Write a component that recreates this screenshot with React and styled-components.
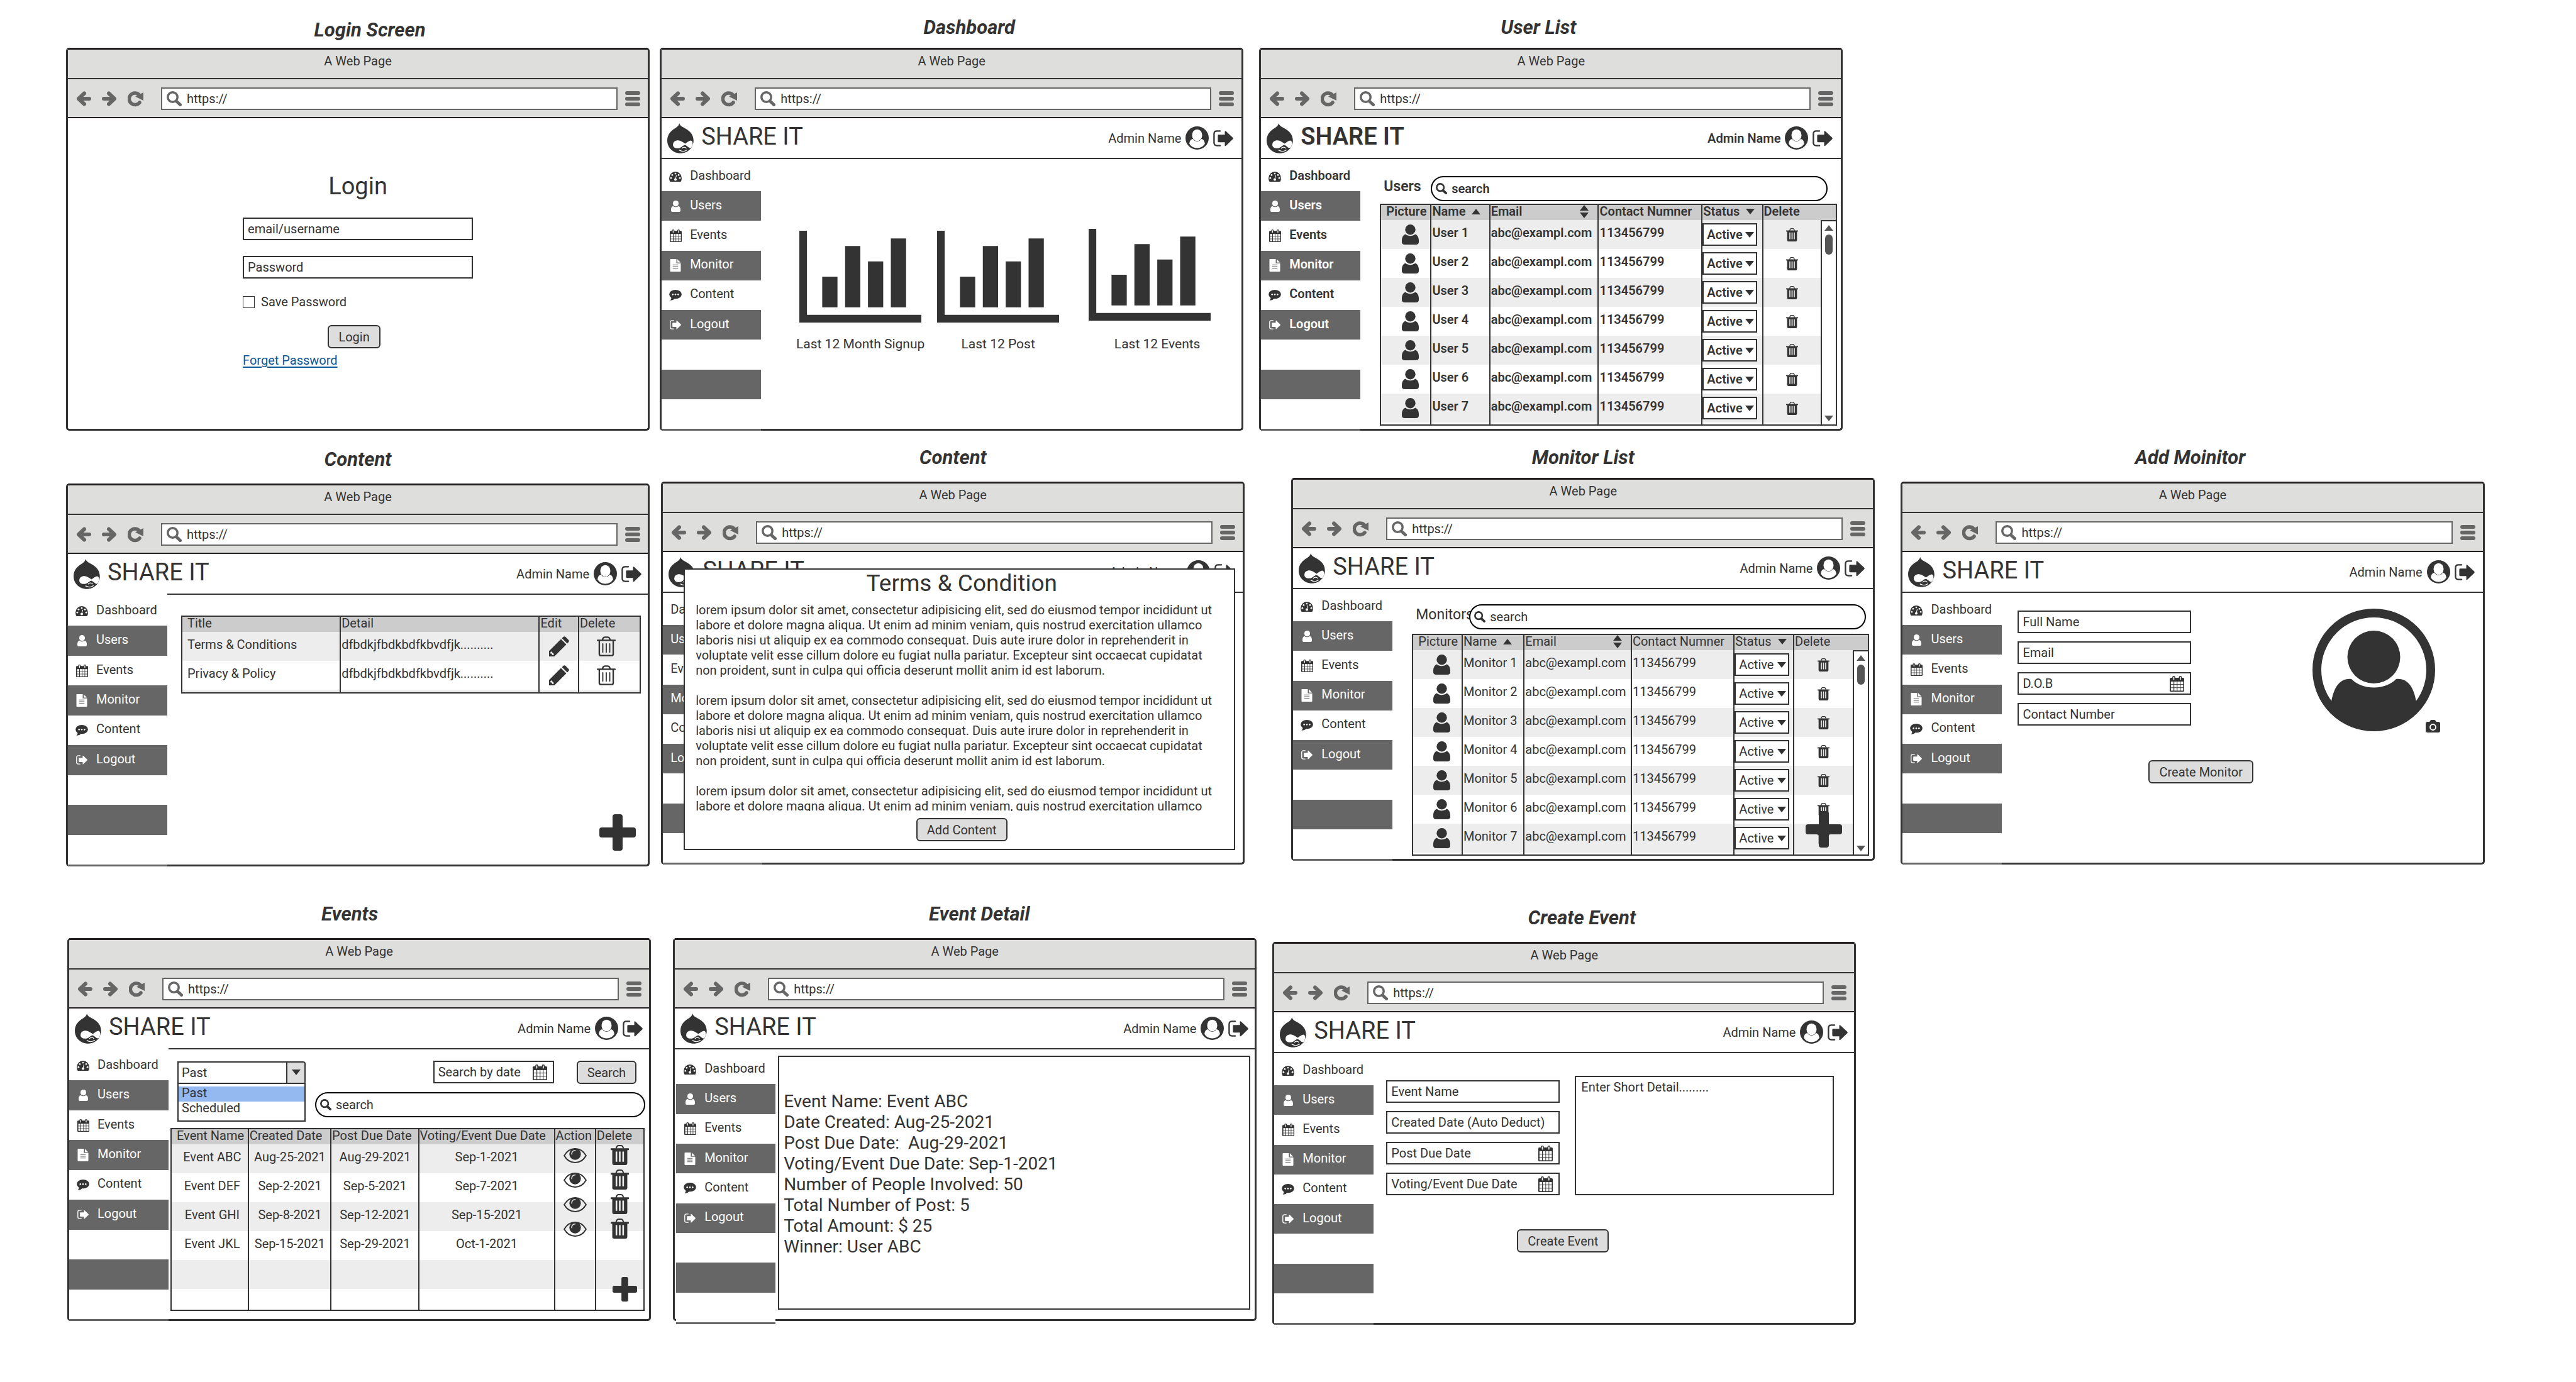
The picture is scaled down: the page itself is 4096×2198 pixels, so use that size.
import React from "react";
import styled, { createGlobalStyle, css } from "styled-components";

const ink = "#333333";
const black = "#231f20";
const slate = "#666666";
const chrome = "#dededc";
const headGray = "#cccccc";
const stripe = "#ededed";

const GlobalStyle = createGlobalStyle`
  *, *::before, *::after { box-sizing: border-box; }
  body {
    margin: 0;
    background: #ffffff;
    color: ${ink};
    font-family: Roboto, "Liberation Sans", sans-serif;
    font-size: 20px;
    line-height: 24px;
  }
  button, input, select, textarea { font: inherit; color: inherit; }
  input::placeholder, textarea::placeholder { color: ${ink}; opacity: 1; }
  svg { display: block; flex: none; }
`;

/* ---------- icons ---------- */

const LogoIcon = () => (
  <svg width="42" height="48" viewBox="57 30 166 189" aria-hidden="true">
    <path
      fill={ink}
      d="M133 30C136 45 150 52 170 62C202 79 222 105 222 138C222 185 185 218 140 218C92 218 57 182 57 138C57 100 80 76 108 60C122 52 130 42 133 30Z"
    />
    <path
      fill="#fff"
      d="M93 165C93 146 108 136 127 137C145 139 158 151 170 158C180 151 192 139 205 138C215 140 218 150 216 162C214 175 207 187 200 186C190 184 180 170 168 166C155 172 142 187 122 187C103 187 93 178 93 165Z"
    />
    <path fill={ink} d="M140 190C150 174 160 168 168 168C178 170 190 182 194 190C186 200 150 202 140 190Z" />
    <path fill="none" stroke="#fff" strokeWidth="5" strokeLinecap="round" d="M149 187C156 178 171 178 176 187M133 199C148 208 168 208 181 198" />
    <path fill="none" stroke="#fff" strokeWidth="3" d="M200 198C210 188 217 174 219 160" />
  </svg>
);

const DashIcon = () => (
  <svg width="20" height="16" viewBox="69 342 78 63" aria-hidden="true">
    <path fill={ink} d="M69 382a39 40 0 0 1 78 0C147 392 145 399 141 405H75C71 399 69 392 69 382Z" />
    <g fill="#fff">
      <circle cx="80" cy="382" r="5.5" />
      <circle cx="88" cy="363" r="5.5" />
      <circle cx="108" cy="354" r="5.5" />
      <circle cx="128" cy="363" r="5.5" />
      <circle cx="136" cy="382" r="5.5" />
      <circle cx="108" cy="391" r="8" />
      <path d="M112 365l4 1-6 24-4-1Z" />
    </g>
  </svg>
);

const UserIcon = ({ width = 15, height = 18, color = "#fff" }) => (
  <svg width={width} height={height} viewBox="78 521 56 70" preserveAspectRatio="none" aria-hidden="true">
    <ellipse cx="106" cy="539" rx="17" ry="18" fill={color} />
    <path
      fill={color}
      d="M90 555c4 4 10 6 16 6s12-2 16-6c9 3 13 14 12 28c0 5-4 8-9 8H87c-5 0-9-3-9-8c-1-14 3-25 12-28Z"
    />
  </svg>
);

const cols = [75, 92, 108, 124];
const lines = [732, 748, 764];
const CalendarIcon = ({ width = 19, height = 20 }) => (
  <svg width={width} height={height} viewBox="69 704 73 78" preserveAspectRatio="none" aria-hidden="true">
    <rect x="69" y="713" width="73" height="69" rx="5" fill={ink} />
    {lines.map((y) => cols.map((x) => <rect key={`${x}-${y}`} x={x} y={y} width="13" height="13" fill="#fff" />))}
    {[82, 115].map((x) => (
      <g key={x}>
        <rect x={x} y="704" width="15" height="24" rx="7" fill={ink} />
        <rect x={x + 5} y="709" width="5" height="15" rx="2" fill="#fff" />
      </g>
    ))}
  </svg>
);

const FileIcon = () => (
  <svg width="18" height="20" viewBox="72 889 68 80" aria-hidden="true">
    <path fill="#fff" d="M75 889H112V916H140V965Q140 969 136 969H76Q72 969 72 965V892Q72 889 75 889ZM118 890L139 911H118Z" />
    <path stroke={slate} strokeWidth="4" d="M89 926H123M89 937H123M89 948H123" />
  </svg>
);

const CommentIcon = () => (
  <svg width="20" height="17" viewBox="69 1086 78 67" aria-hidden="true">
    <ellipse cx="108" cy="1114" rx="39" ry="28" fill={ink} />
    <path fill={ink} d="M81 1130C84 1142 80 1147 74 1152C90 1152 99 1147 105 1139Z" />
    <g fill="#fff">
      <circle cx="91" cy="1115" r="5" />
      <circle cx="108" cy="1115" r="5" />
      <circle cx="125" cy="1115" r="5" />
    </g>
  </svg>
);

const ExitIcon = ({ width = 18, height = 15, color = "#fff" }) => (
  <svg width={width} height={height} viewBox="69 1272 69 57" preserveAspectRatio="none" aria-hidden="true">
    <path fill="none" stroke={color} strokeWidth="5" strokeLinecap="round" d="M93 1275H82Q72 1275 72 1285V1316Q72 1326 82 1326H93" />
    <path fill={color} d="M88 1288H109V1277Q109 1273 113 1276L136 1298Q139 1301 136 1304L113 1326Q109 1329 109 1325V1314H88Q85 1314 85 1311V1291Q85 1288 88 1288Z" />
  </svg>
);

const AccountIcon = () => (
  <svg width="37" height="37" viewBox="0 0 36 36" aria-hidden="true">
    <circle cx="18" cy="18" r="18" fill={ink} />
    <ellipse cx="18" cy="13.5" rx="7.8" ry="9" fill="#fff" />
    <path fill="#fff" d="M6 27C6.500 22 8.500 20 11.500 19.500C14.500 24.500 21.500 24.500 24.500 19.500C27.500 20 29.500 22 30 27C27 31.500 23 33.500 18 33.500C13 33.500 9 31.500 6 27Z" />
  </svg>
);

const PortraitIcon = () => (
  <svg width="195" height="195" viewBox="0 0 195 195" aria-hidden="true">
    <circle cx="97.5" cy="97.5" r="90.5" fill="#fff" stroke={ink} strokeWidth="14" />
    <circle cx="97.5" cy="77" r="42" fill={ink} />
    <path
      fill={ink}
      d="M62 112C70 120 82 125.500 97.500 125.500C113 125.500 125 120 133 112C152 110 161 126 165 148L168 160C150 180 125 190 97.500 190C70 190 45 180 27 160L30 148C34 126 43 110 62 112Z"
    />
  </svg>
);

const CameraIcon = () => (
  <svg width="23" height="20" viewBox="0 0 23 20" aria-hidden="true">
    <path fill={ink} d="M7 2Q7.500 0 9 0H14Q15.500 0 16 2L17 3H20Q23 3 23 6V17Q23 20 20 20H3Q0 20 0 17V6Q0 3 3 3H6Z" />
    <circle cx="11.500" cy="11.500" r="4.500" fill="none" stroke="#fff" strokeWidth="1.800" />
  </svg>
);

const EyeIcon = () => (
  <svg width="37" height="24" viewBox="138 108 144 94" aria-hidden="true">
    <path fill="none" stroke={ink} strokeWidth="8" d="M142 155C158 127 184 112 210 112S262 127 278 155C262 183 236 198 210 198S158 183 142 155Z" />
    <circle cx="210" cy="145" r="36" fill={ink} />
    <path fill="none" stroke={stripe} strokeWidth="6" strokeLinecap="round" d="M189 146C189 132 197 123 210 123" />
  </svg>
);

const TrashIcon = ({ width = 19, height = 21 }) => (
  <svg width={width} height={height} viewBox="441 87 114 126" preserveAspectRatio="none" aria-hidden="true">
    <rect x="441" y="108" width="114" height="11" rx="2" fill={ink} />
    <path fill="none" stroke={ink} strokeWidth="8" d="M474 110L480 97Q483 91 490 91H506Q513 91 516 97L522 110" />
    <path fill={ink} d="M451 114H545V200Q545 213 533 213H463Q451 213 451 200Z" />
    <path stroke={stripe} strokeWidth="10" d="M477 128V192M498 128V192M519 128V192" />
  </svg>
);

const TrashOutlineIcon = () => (
  <svg width="30" height="32" viewBox="441 87 114 126" preserveAspectRatio="none" aria-hidden="true">
    <path fill="none" stroke={ink} strokeWidth="9" strokeLinecap="round" d="M445 112H551M474 110L480 97Q483 92 490 92H506Q513 92 516 97L522 110" />
    <path fill="none" stroke={ink} strokeWidth="9" d="M456 114V198Q456 208 466 208H530Q540 208 540 198V114" />
    <path stroke={ink} strokeWidth="7" strokeLinecap="round" d="M477 134V186M498 134V186M519 134V186" />
  </svg>
);

const PencilIcon = () => (
  <svg width="32" height="32" viewBox="0 0 32 32" aria-hidden="true">
    <path fill={ink} d="M0 32V23.500L19 4.500L27.500 13L8.500 32ZM20.500 3L23 .8Q24.500 -.3 26 .8L31.200 6Q32.300 7.500 31.200 9L29 11.500Z" />
    <path fill="#fff" d="M3.500 24L8 28.500L6.500 29.800H4.700V27.400H2.300V25.300Z" />
  </svg>
);

const PlusIcon = ({ size }) => (
  <svg width={size} height={size} viewBox="0 0 58 58" aria-hidden="true">
    <rect x="21" width="16" height="58" rx="4" fill={ink} />
    <rect y="21" width="58" height="16" rx="4" fill={ink} />
  </svg>
);

const BackIcon = () => (
  <svg width="24" height="24" viewBox="0 0 24 24" aria-hidden="true">
    <path fill="none" stroke={slate} strokeWidth="6" strokeLinecap="round" strokeLinejoin="round" d="M13 3.500L4 12L13 20.500M5 12H21" />
  </svg>
);

const ForwardIcon = () => (
  <svg width="24" height="24" viewBox="0 0 24 24" aria-hidden="true">
    <path fill="none" stroke={slate} strokeWidth="6" strokeLinecap="round" strokeLinejoin="round" d="M11 3.500L20 12L11 20.500M19 12H3" />
  </svg>
);

const ReloadIcon = () => (
  <svg width="25" height="25" viewBox="0 0 25 25" aria-hidden="true">
    <path fill="none" stroke={slate} strokeWidth="5.500" strokeLinecap="round" d="M19 18A9.300 9.300 0 1 1 18 5.500" />
    <path fill={slate} d="M25 2V15L12 8.500Z" />
  </svg>
);

const MenuIcon = () => (
  <svg width="24" height="24" viewBox="0 0 24 24" aria-hidden="true">
    <rect width="24" height="6" rx="3" fill={slate} />
    <rect y="9" width="24" height="6" rx="3" fill={slate} />
    <rect y="18" width="24" height="6" rx="3" fill={slate} />
  </svg>
);

const SearchIcon = ({ size = 18, color = ink }) => (
  <svg width={size} height={size} viewBox="0 0 24 24" aria-hidden="true">
    <circle cx="9.500" cy="9.500" r="7.700" fill="none" stroke={color} strokeWidth="3.500" />
    <path stroke={color} strokeWidth="5" strokeLinecap="round" d="M15.500 16L21.500 21.500" />
  </svg>
);

const UpArrow = () => (
  <svg width="14" height="9" viewBox="0 0 14 9" aria-hidden="true">
    <path fill="currentColor" d="M7 0L14 9H0Z" />
  </svg>
);

const DownArrow = () => (
  <svg width="14" height="9" viewBox="0 0 14 9" aria-hidden="true">
    <path fill="currentColor" d="M0 0H14L7 9Z" />
  </svg>
);

const BarChart = () => (
  <svg width="194" height="146" viewBox="0 0 16 12" preserveAspectRatio="none" aria-hidden="true">
    <path fill={ink} d="M0 0H1V11H16V12H0ZM3 6H5V10H3ZM6 2H8V10H6ZM9 4H11V10H9ZM12 1H14V10H12Z" />
  </svg>
);

/* ---------- board and window ---------- */

const Canvas = styled.main`
  padding-top: 28px;
`;

const BoardRow = styled.div`
  display: flex;
  align-items: flex-start;
  margin-top: ${(p) => p.$space || 0}px;
`;

const Board = styled.section`
  flex: 0 0 22.66%;
  margin-left: ${(p) => p.$before}px;
  margin-top: ${(p) => p.$drop || 0}px;
  font-weight: ${(p) => (p.$strong ? 600 : 400)};
`;

const BoardTitle = styled.h2`
  margin: 0 0 ${(p) => p.$space}px;
  padding-left: ${(p) => p.$lead || 0}px;
  padding-right: ${(p) => p.$trail || 0}px;
  font-size: 31px;
  line-height: 32px;
  font-weight: 700;
  font-style: italic;
  text-align: center;
`;

const Window = styled.div`
  position: relative;
  display: flex;
  flex-direction: column;
  min-height: 609px;
  border: 3px solid ${ink};
  border-top-color: ${black};
  border-radius: 5px;
  background: #ffffff;
`;

const TitleBar = styled.div`
  height: 47px;
  padding-top: 6px;
  border-bottom: 2px solid ${ink};
  border-radius: 2px 2px 0 0;
  background: ${chrome};
  font-weight: 400;
  text-align: center;
`;

const Toolbar = styled.div`
  display: flex;
  align-items: center;
  height: 62px;
  padding: 2px 12px 0 13px;
  border-bottom: 2px solid ${black};
  background: ${chrome};
  font-weight: 400;
`;

const NavButtons = styled.div`
  display: flex;
  gap: 17px;
  margin-right: 28px;
`;

const IconButton = styled.button`
  display: block;
  padding: 0;
  border: 0;
  background: none;
`;

const AddressBox = styled.label`
  display: flex;
  flex: 1;
  align-items: center;
  gap: 8px;
  height: 36px;
  margin-right: 12px;
  padding-left: 7px;
  border: 2px solid ${slate};
  background: #ffffff;
`;

const BareInput = styled.input`
  flex: 1;
  width: 100%;
  min-width: 0;
  height: 32px;
  padding: 0;
  border: 0;
  outline: 0;
  background: none;
`;

const AppHeader = styled.header`
  display: flex;
  align-items: center;
  justify-content: space-between;
  height: 65px;
  padding: 0 ${(p) => (p.$wide ? 10 : 13)}px 0 9px;
  border-bottom: 2px solid ${ink};
`;

const Brand = styled.div`
  display: flex;
  align-items: center;
  gap: 12px;
`;

const BrandName = styled.span`
  padding-bottom: 6px;
  font-size: 38px;
  line-height: 44px;
`;

const Account = styled.div`
  display: flex;
  align-items: center;
  gap: 7px;
`;

const Body = styled.div`
  display: flex;
  flex: 1;
`;

const Side = styled.nav`
  position: relative;
  display: grid;
  flex: none;
  grid-template-rows: repeat(9, 1fr) 3px;
  width: 158px;
  margin: ${(p) => (p.$wide ? -2 : 0)}px 0 -3px;
  padding-top: 4px;
  background: #ffffff;
  ${(p) =>
    p.$lowered &&
    css`
      margin: 4px 0 -8px 2px;
    `}
`;

const SideItem = styled.a`
  display: flex;
  align-items: center;
  gap: 13px;
  min-height: 0;
  padding-left: 12px;
  background: ${(p) => (p.$dark ? slate : "#ffffff")};
  color: ${(p) => (p.$dark ? "#ffffff" : ink)};
  text-decoration: none;
`;

const SideIcon = styled.span`
  display: flex;
  justify-content: center;
  width: 20px;
`;

const SideLabel = styled.span`
  padding-bottom: 4px;
`;

const SideBlank = styled.span`
  background: ${(p) => (p.$dark ? slate : "#ffffff")};
`;

const Main = styled.div`
  flex: 1;
  min-width: 0;
  padding: ${(p) => p.$pad};
`;

const navItems = [
  ["Dashboard", DashIcon],
  ["Users", UserIcon],
  ["Events", CalendarIcon],
  ["Monitor", FileIcon],
  ["Content", CommentIcon],
  ["Logout", ExitIcon],
];

function Browser({ children }) {
  return (
    <Window>
      <TitleBar>A Web Page</TitleBar>
      <Toolbar>
        <NavButtons>
          <IconButton aria-label="Back"><BackIcon /></IconButton>
          <IconButton aria-label="Forward"><ForwardIcon /></IconButton>
          <IconButton aria-label="Reload"><ReloadIcon /></IconButton>
        </NavButtons>
        <AddressBox>
          <SearchIcon size={24} color={slate} />
          <BareInput type="text" aria-label="Address" defaultValue="https://" />
        </AddressBox>
        <IconButton aria-label="Menu"><MenuIcon /></IconButton>
      </Toolbar>
      {children}
    </Window>
  );
}

function AppWindow({ children, pad, lowered, raised, wide, plainNav, overlay }) {
  return (
    <Browser>
      <AppHeader $wide={wide}>
        <Brand>
          <LogoIcon />
          <BrandName>SHARE IT</BrandName>
        </Brand>
        <Account>
          <span>Admin Name</span>
          <AccountIcon />
          <IconButton aria-label="Sign out"><ExitIcon width={32} height={26} color={ink} /></IconButton>
        </Account>
      </AppHeader>
      <Body>
        <Side $lowered={lowered} $wide={raised}>
          {navItems.map(([label, Icon], i) => (
            <SideItem href="#" key={label} $dark={i % 2 === 1}>
              {!plainNav && <SideIcon><Icon /></SideIcon>}
              <SideLabel>{label}</SideLabel>
            </SideItem>
          ))}
          <SideBlank />
          <SideBlank $dark />
          <SideBlank />
          <SideBlank $dark />
        </Side>
        <Main $pad={pad}>{children}</Main>
      </Body>
      {overlay}
    </Browser>
  );
}

/* ---------- form parts ---------- */

const Button = styled.button`
  height: 37px;
  padding: 0 15px;
  border: 2px solid ${ink};
  border-radius: 6px;
  background: #dddddd;
`;

const TextField = styled.input`
  display: block;
  width: 100%;
  height: 36px;
  padding: 0 6px;
  border: 2px solid ${ink};
  border-radius: 0;
  outline: 0;
  background: #ffffff;
`;

const DateBox = styled.label`
  display: flex;
  align-items: center;
  width: ${(p) => p.$width};
  height: 36px;
  padding: 0 9px 0 6px;
  border: 2px solid ${ink};
  background: #ffffff;
`;

const DateField = ({ label, width = "100%" }) => (
  <DateBox $width={width}>
    <BareInput type="text" aria-label={label} placeholder={label} />
    <CalendarIcon width={23} height={25} />
  </DateBox>
);

const LoginForm = styled.form`
  display: flex;
  flex-direction: column;
  align-self: center;
  width: 366px;
  margin-top: 86px;
`;

const LoginHeading = styled.h3`
  margin: 0 0 28px;
  font-size: 38px;
  line-height: 44px;
  font-weight: 400;
  text-align: center;
`;

const LoginFields = styled.div`
  display: grid;
  gap: 25px;
`;

const SaveLabel = styled.label`
  display: flex;
  align-items: center;
  gap: 10px;
  height: 20px;
  margin: 27px 0;
`;

const CheckBox = styled.input`
  width: 19px;
  height: 19px;
  margin: 0;
  border: 1px solid ${ink};
  background: #ffffff;
  appearance: none;
`;

const LoginAction = styled.div`
  display: flex;
  justify-content: center;
  padding-right: 12px;
`;

const ForgotLink = styled.a`
  align-self: flex-start;
  margin-top: 7px;
  color: #0b5696;
  text-decoration: underline;
  text-decoration-thickness: 2px;
  text-underline-offset: 3px;
`;

const FormRow = styled.div`
  display: flex;
  align-items: flex-start;
  justify-content: space-between;
  gap: 24px;
`;

const FieldStack = styled.div`
  display: grid;
  flex: none;
  align-content: start;
  gap: 13px;
  width: 276px;
  padding-top: ${(p) => p.$top}px;
`;

const FormAction = styled.div`
  padding: 54px 0 0 208px;
`;

const DetailArea = styled.textarea`
  flex: 1;
  align-self: stretch;
  min-width: 0;
  padding: 4px 8px;
  border: 2px solid ${ink};
  outline: 0;
  background: #ffffff;
  resize: none;
`;

const Portrait = styled.div`
  position: relative;
  margin-bottom: -8px;
`;

const CameraButton = styled(IconButton)`
  position: absolute;
  right: -8px;
  bottom: -2px;
`;

/* ---------- search and lists ---------- */

const SearchRow = styled.div`
  display: flex;
  align-items: flex-start;
  margin-bottom: ${(p) => p.$below}px;
  padding: 0 ${(p) => p.$right}px 0 6px;
`;

const ListLabel = styled.h3`
  flex: none;
  width: ${(p) => p.$width}px;
  margin: 0;
  font-size: 23px;
  line-height: 34px;
  font-weight: inherit;
  white-space: nowrap;
`;

const SearchPill = styled.label`
  position: relative;
  display: flex;
  flex: 1;
  align-items: center;
  gap: 7px;
  height: 40px;
  padding: 0 16px 0 6px;
  border: 2px solid #000000;
  border-radius: 20px;
  background: #ffffff;
`;

const SearchBox = () => (
  <SearchPill>
    <SearchIcon />
    <BareInput type="text" aria-label="Search" placeholder="search" />
  </SearchPill>
);

const Frame = styled.div`
  position: relative;
  border: 2px solid ${ink};
`;

const Table = styled.table`
  width: 100%;
  border-collapse: separate;
  border-spacing: 0;
  table-layout: fixed;
`;

const Col = styled.col`
  width: ${(p) => p.$w};
`;

const Th = styled.th`
  height: 24px;
  padding: 0 0 4px 1px;
  background: ${headGray};
  font-weight: inherit;
  line-height: 20px;
  text-align: left;
  white-space: nowrap;
  & + & { border-left: 2px solid ${ink}; }
  &:first-child { padding-left: 8px; }
`;

const HeadCell = styled.span`
  display: flex;
  align-items: center;
  gap: 10px;
  height: 20px;
`;

const SortBoth = styled.span`
  display: grid;
  gap: 3px;
  margin-left: auto;
  margin-right: 14px;
`;

const Td = styled.td`
  position: relative;
  padding: 0 0 6px 1px;
  white-space: nowrap;
  text-align: ${(p) => (p.$center ? "center" : "left")};
  & + & { border-left: 2px solid ${ink}; }
  &:first-child { padding-left: 8px; }
`;

const MediaTd = styled(Td)`
  &, &:first-child { padding: 0 ${(p) => p.$right || 0}px 0 ${(p) => p.$left || 0}px; }
  svg { margin: 0 auto; }
`;

const FillTd = styled(Td)`
  &, &:first-child { padding: 0; }
`;

const Tr = styled.tr`
  height: ${(p) => p.$h || 46}px;
  &:nth-child(odd) { background: ${stripe}; }
`;

const StatusBox = styled.span`
  position: relative;
  display: block;
  width: 87px;
`;

const StatusSelect = styled.select`
  display: block;
  width: 87px;
  height: 36px;
  padding: 0 5px;
  border: 2px solid ${ink};
  border-radius: 0;
  background: #ffffff;
  appearance: none;
`;

const StatusArrow = styled.span`
  position: absolute;
  top: 14px;
  right: 5px;
  pointer-events: none;
`;

const RowButton = styled(IconButton)`
  margin: 0 auto;
`;

const ScrollTrack = styled.div`
  position: absolute;
  top: 24px;
  right: 0;
  bottom: 0;
  display: flex;
  flex-direction: column;
  align-items: center;
  width: 24px;
  padding: 6px 0 5px;
  border-top: 2px solid ${ink};
  border-left: 2px solid ${ink};
  background: #ffffff;
  color: #555555;
`;

const ScrollThumb = styled.span`
  width: 12px;
  height: 32px;
  margin: 6px 0 auto;
  border-radius: 6px;
  background: #555555;
`;

const PlusButton = styled(IconButton)`
  position: absolute;
  right: ${(p) => p.$right}px;
  bottom: ${(p) => p.$bottom}px;
`;

const fillerCells = (n) => Array.from({ length: n }, (_, i) => <FillTd key={i} />);

function PeopleTable({ prefix, widths }) {
  return (
    <Frame>
      <Table>
        <colgroup>{widths.map((w, i) => <Col key={i} $w={w} />)}</colgroup>
        <thead>
          <tr>
            <Th>Picture</Th>
            <Th><HeadCell>Name<UpArrow /></HeadCell></Th>
            <Th><HeadCell>Email<SortBoth><UpArrow /><DownArrow /></SortBoth></HeadCell></Th>
            <Th>Contact Numner</Th>
            <Th><HeadCell>Status<DownArrow /></HeadCell></Th>
            <Th>Delete</Th>
          </tr>
        </thead>
        <tbody>
          {[1, 2, 3, 4, 5, 6, 7].map((n) => (
            <Tr key={n}>
              <MediaTd $left={14}><UserIcon width={27} height={32} color={ink} /></MediaTd>
              <Td>{prefix} {n}</Td>
              <Td>abc@exampl.com</Td>
              <Td>113456799</Td>
              <MediaTd>
                <StatusBox>
                  <StatusSelect aria-label={`${prefix} ${n} status`} defaultValue="Active">
                    <option>Active</option>
                  </StatusSelect>
                  <StatusArrow><DownArrow /></StatusArrow>
                </StatusBox>
              </MediaTd>
              <MediaTd $right={24}>
                <RowButton aria-label={`Delete ${prefix} ${n}`}><TrashIcon /></RowButton>
              </MediaTd>
            </Tr>
          ))}
          <Tr $h={3}>{fillerCells(6)}</Tr>
        </tbody>
      </Table>
      <ScrollTrack>
        <UpArrow />
        <ScrollThumb />
        <DownArrow />
      </ScrollTrack>
    </Frame>
  );
}

/* ---------- dashboard ---------- */

const ChartRow = styled.div`
  display: flex;
  align-items: flex-end;
`;

const Figure = styled.figure`
  display: flex;
  flex-direction: column;
  gap: ${(p) => p.$gap}px;
  width: ${(p) => p.$width}px;
  margin: 0 0 0 ${(p) => p.$before}px;
`;

const ChartBox = styled.div`
  display: flex;
  justify-content: ${(p) => p.$align || "center"};
`;

const Caption = styled.figcaption`
  font-size: 21px;
  text-align: center;
  white-space: nowrap;
`;

/* ---------- terms dialog ---------- */

const Dialog = styled.div`
  position: absolute;
  z-index: 1;
  top: 135px;
  right: 12px;
  bottom: 20px;
  left: 33px;
  display: flex;
  flex-direction: column;
  align-items: center;
  padding: 0 10px 0 17px;
  border: 2px solid ${ink};
  background: #ffffff;
`;

const DialogTitle = styled.h3`
  margin: 0 0 8px;
  font-size: 37px;
  line-height: 44px;
  font-weight: 400;
`;

const DialogText = styled.div`
  align-self: stretch;
  height: 332px;
  margin-bottom: 11px;
  overflow: hidden;
  white-space: pre;
`;

const lorem = `lorem ipsum dolor sit amet, consectetur adipisicing elit, sed do eiusmod tempor incididunt ut
labore et dolore magna aliqua. Ut enim ad minim veniam, quis nostrud exercitation ullamco
laboris nisi ut aliquip ex ea commodo consequat. Duis aute irure dolor in reprehenderit in
voluptate velit esse cillum dolore eu fugiat nulla pariatur. Excepteur sint occaecat cupidatat
non proident, sunt in culpa qui officia deserunt mollit anim id est laborum.`;

const loremStart = lorem.split("\n").slice(0, 2).join("\n");

/* ---------- events ---------- */

const FilterRow = styled.div`
  display: flex;
  align-items: center;
  justify-content: space-between;
  padding: 0 20px 0 14px;
`;

const FilterEnd = styled.div`
  display: flex;
  gap: 36px;
`;

const DropBox = styled.div`
  position: relative;
  width: 204px;
`;

const DropSelect = styled.select`
  display: block;
  width: 100%;
  height: 36px;
  padding: 0 5px;
  border: 2px solid ${ink};
  border-radius: 0 4px 4px 0;
  background: #ffffff;
  appearance: none;
`;

const DropArrow = styled.span`
  position: absolute;
  top: 2px;
  right: 2px;
  display: flex;
  align-items: center;
  justify-content: center;
  width: 29px;
  height: 32px;
  border-left: 2px solid ${ink};
  background: #dddddd;
  pointer-events: none;
`;

const DropMenu = styled.ul`
  position: absolute;
  top: 34px;
  left: 0;
  width: 100%;
  height: 62px;
  margin: 0;
  padding: 4px 0 0;
  border: 2px solid ${ink};
  background: #ffffff;
  list-style: none;
`;

const DropItem = styled.li`
  padding: 0 0 3px 5px;
  background: ${(p) => (p.$active ? "#94b9f1" : "none")};
  line-height: 21px;
`;

const EventSearch = styled.div`
  display: flex;
  margin: 13px 6px 17px 233px;
`;

const EventTableWrap = styled.div`
  margin: 0 7px 0 3px;
`;

const IconStack = styled.div`
  position: absolute;
  z-index: 1;
  top: ${(p) => p.$top}px;
  left: 0;
  display: flex;
  flex-direction: column;
  align-items: center;
  gap: ${(p) => p.$gap}px;
  width: 100%;
`;

const events = [
  ["Event ABC", "Aug-25-2021", "Aug-29-2021", "Sep-1-2021"],
  ["Event DEF", "Sep-2-2021", "Sep-5-2021", "Sep-7-2021"],
  ["Event GHI", "Sep-8-2021", "Sep-12-2021", "Sep-15-2021"],
  ["Event JKL", "Sep-15-2021", "Sep-29-2021", "Oct-1-2021"],
];

function EventTable() {
  return (
    <Frame>
      <Table>
        <colgroup>
          {["16.1%", "17.5%", "18.6%", "28.8%", "8.7%", "10.3%"].map((w, i) => <Col key={i} $w={w} />)}
        </colgroup>
        <thead>
          <tr>
            {["Event Name", "Created Date", "Post Due Date", "Voting/Event Due Date", "Action", "Delete"].map((h) => (
              <Th key={h}>{h}</Th>
            ))}
          </tr>
        </thead>
        <tbody>
          {events.map((row, i) => (
            <Tr key={row[0]}>
              {row.map((cell) => <Td $center key={cell}>{cell}</Td>)}
              <Td>
                {i === 0 && (
                  <IconStack $top={6} $gap={15}>
                    {events.map((e) => <IconButton key={e[0]} aria-label={`View ${e[0]}`}><EyeIcon /></IconButton>)}
                  </IconStack>
                )}
              </Td>
              <Td>
                {i === 0 && (
                  <IconStack $top={1} $gap={7}>
                    {events.map((e) => (
                      <IconButton key={e[0]} aria-label={`Delete ${e[0]}`}><TrashIcon width={29} height={32} /></IconButton>
                    ))}
                  </IconStack>
                )}
              </Td>
            </Tr>
          ))}
          <Tr>{fillerCells(6)}</Tr>
          <Tr $h={33}>{fillerCells(6)}</Tr>
        </tbody>
      </Table>
    </Frame>
  );
}

const DetailPanel = styled.div`
  height: 100%;
  padding: 54px 7px;
  border: 2px solid ${ink};
  font-size: 28px;
  line-height: 33px;
  white-space: pre;
`;

const detailText = `Event Name: Event ABC
Date Created: Aug-25-2021
Post Due Date:  Aug-29-2021
Voting/Event Due Date: Sep-1-2021
Number of People Involved: 50
Total Number of Post: 5
Total Amount: $ 25
Winner: User ABC`;

export default function App() {
  return (
    <Canvas>
      <GlobalStyle />

      <BoardRow>
        <Board $before={105} $drop={4}>
          <BoardTitle $space={12} $lead={38}>Login Screen</BoardTitle>
          <Browser>
            <LoginForm>
              <LoginHeading>Login</LoginHeading>
              <LoginFields>
                <TextField type="text" aria-label="Email or username" placeholder="email/username" />
                <TextField type="text" aria-label="Password" placeholder="Password" />
              </LoginFields>
              <SaveLabel><CheckBox type="checkbox" />Save Password</SaveLabel>
              <LoginAction><Button type="button">Login</Button></LoginAction>
              <ForgotLink href="#">Forget Password</ForgotLink>
            </LoginForm>
          </Browser>
        </Board>

        <Board $before={16}>
          <BoardTitle $space={16} $lead={56}>Dashboard</BoardTitle>
          <AppWindow pad="111px 0 0 55px">
            <ChartRow>
              <Figure $width={206} $before={0} $gap={22}>
                <ChartBox><BarChart /></ChartBox>
                <Caption>Last 12 Month Signup</Caption>
              </Figure>
              <Figure $width={194} $before={19} $gap={22}>
                <ChartBox><BarChart /></ChartBox>
                <Caption>Last 12 Post</Caption>
              </Figure>
              <Figure $width={218} $before={47} $gap={25}>
                <ChartBox $align="flex-start"><BarChart /></ChartBox>
                <Caption>Last 12 Events</Caption>
              </Figure>
            </ChartRow>
          </AppWindow>
        </Board>

        <Board $before={25} $strong>
          <BoardTitle $space={16} $trail={40}>User List</BoardTitle>
          <AppWindow pad="27px 6px 0 31px">
            <SearchRow $below={4} $right={15}>
              <ListLabel $width={75}>Users</ListLabel>
              <SearchBox />
            </SearchRow>
            <PeopleTable prefix="User" widths={["10.8%", "12.9%", "23.9%", "22.8%", "13.3%", "16.3%"]} />
          </AppWindow>
        </Board>
      </BoardRow>

      <BoardRow $space={27}>
        <Board $before={105} $drop={3}>
          <BoardTitle $space={22}>Content</BoardTitle>
          <AppWindow
            wide
            raised
            pad="33px 11px 0 22px"
            overlay={<PlusButton aria-label="Add content" $right={19} $bottom={22}><PlusIcon size={58} /></PlusButton>}
          >
            <Frame>
              <Table>
                <colgroup>{["34.4%", "43.5%", "8.6%", "13.5%"].map((w) => <Col key={w} $w={w} />)}</colgroup>
                <thead>
                  <tr><Th>Title</Th><Th>Detail</Th><Th>Edit</Th><Th>Delete</Th></tr>
                </thead>
                <tbody>
                  {["Terms & Conditions", "Privacy & Policy"].map((title) => (
                    <Tr key={title}>
                      <Td>{title}</Td>
                      <Td>dfbdkjfbdkbdfkbvdfjk..........</Td>
                      <MediaTd><RowButton aria-label={`Edit ${title}`}><PencilIcon /></RowButton></MediaTd>
                      <MediaTd $right={10}><RowButton aria-label={`Delete ${title}`}><TrashOutlineIcon /></RowButton></MediaTd>
                    </Tr>
                  ))}
                  <Tr $h={4}>{fillerCells(4)}</Tr>
                </tbody>
              </Table>
            </Frame>
          </AppWindow>
        </Board>

        <Board $before={18}>
          <BoardTitle $space={22}>Content</BoardTitle>
          <AppWindow
            pad="0"
            plainNav
            overlay={
              <Dialog role="dialog" aria-label="Terms & Condition">
                <DialogTitle>Terms &amp; Condition</DialogTitle>
                <DialogText>{[lorem, lorem, loremStart].join("\n\n")}</DialogText>
                <Button type="button">Add Content</Button>
              </Dialog>
            }
          />
        </Board>

        <Board $before={74}>
          <BoardTitle $space={16}>Monitor List</BoardTitle>
          <AppWindow
            pad="24px 6px 0 31px"
            overlay={<PlusButton aria-label="Add monitor" $right={49} $bottom={18}><PlusIcon size={58} /></PlusButton>}
          >
            <SearchRow $below={7} $right={5}>
              <ListLabel $width={85}>Monitors</ListLabel>
              <SearchBox />
            </SearchRow>
            <PeopleTable prefix="Monitor" widths={["10.6%", "13.6%", "23.6%", "22.6%", "13.1%", "16.5%"]} />
          </AppWindow>
        </Board>

        <Board $before={41}>
          <BoardTitle $space={22} $trail={8}>Add Moinitor</BoardTitle>
          <AppWindow pad="25px 76px 0 25px">
            <FormRow>
              <FieldStack $top={3}>
                <TextField type="text" aria-label="Full Name" placeholder="Full Name" />
                <TextField type="text" aria-label="Email" placeholder="Email" />
                <DateField label="D.O.B" />
                <TextField type="text" aria-label="Contact Number" placeholder="Contact Number" />
              </FieldStack>
              <Portrait>
                <PortraitIcon />
                <CameraButton aria-label="Upload picture"><CameraIcon /></CameraButton>
              </Portrait>
            </FormRow>
            <FormAction><Button type="button">Create Monitor</Button></FormAction>
          </AppWindow>
        </Board>
      </BoardRow>

      <BoardRow $space={60}>
        <Board $before={107}>
          <BoardTitle $space={22} $trail={30}>Events</BoardTitle>
          <AppWindow
            wide
            raised
            pad="18px 0 0"
            overlay={<PlusButton aria-label="Add event" $right={19} $bottom={28}><PlusIcon size={39} /></PlusButton>}
          >
            <FilterRow>
              <DropBox>
                <DropSelect aria-label="Event type" defaultValue="Past">
                  <option>Past</option>
                  <option>Scheduled</option>
                </DropSelect>
                <DropArrow><DownArrow /></DropArrow>
                <DropMenu>
                  <DropItem $active>Past</DropItem>
                  <DropItem>Scheduled</DropItem>
                </DropMenu>
              </DropBox>
              <FilterEnd>
                <DateField label="Search by date" width="192px" />
                <Button type="button">Search</Button>
              </FilterEnd>
            </FilterRow>
            <EventSearch><SearchBox /></EventSearch>
            <EventTableWrap><EventTable /></EventTableWrap>
          </AppWindow>
        </Board>

        <Board $before={35}>
          <BoardTitle $space={22} $lead={46}>Event Detail</BoardTitle>
          <AppWindow wide lowered pad="10px 7px 15px 4px">
            <DetailPanel>{detailText}</DetailPanel>
          </AppWindow>
        </Board>

        <Board $before={25} $drop={6}>
          <BoardTitle $space={22} $lead={56}>Create Event</BoardTitle>
          <AppWindow wide pad="36px 32px 0 20px">
            <FormRow>
              <FieldStack $top={7}>
                <TextField type="text" aria-label="Event Name" placeholder="Event Name" />
                <TextField type="text" aria-label="Created Date" placeholder="Created Date (Auto Deduct)" />
                <DateField label="Post Due Date" />
                <DateField label="Voting/Event Due Date" />
              </FieldStack>
              <DetailArea aria-label="Short detail" placeholder="Enter Short Detail........." />
            </FormRow>
            <FormAction><Button type="button">Create Event</Button></FormAction>
          </AppWindow>
        </Board>
      </BoardRow>
    </Canvas>
  );
}
